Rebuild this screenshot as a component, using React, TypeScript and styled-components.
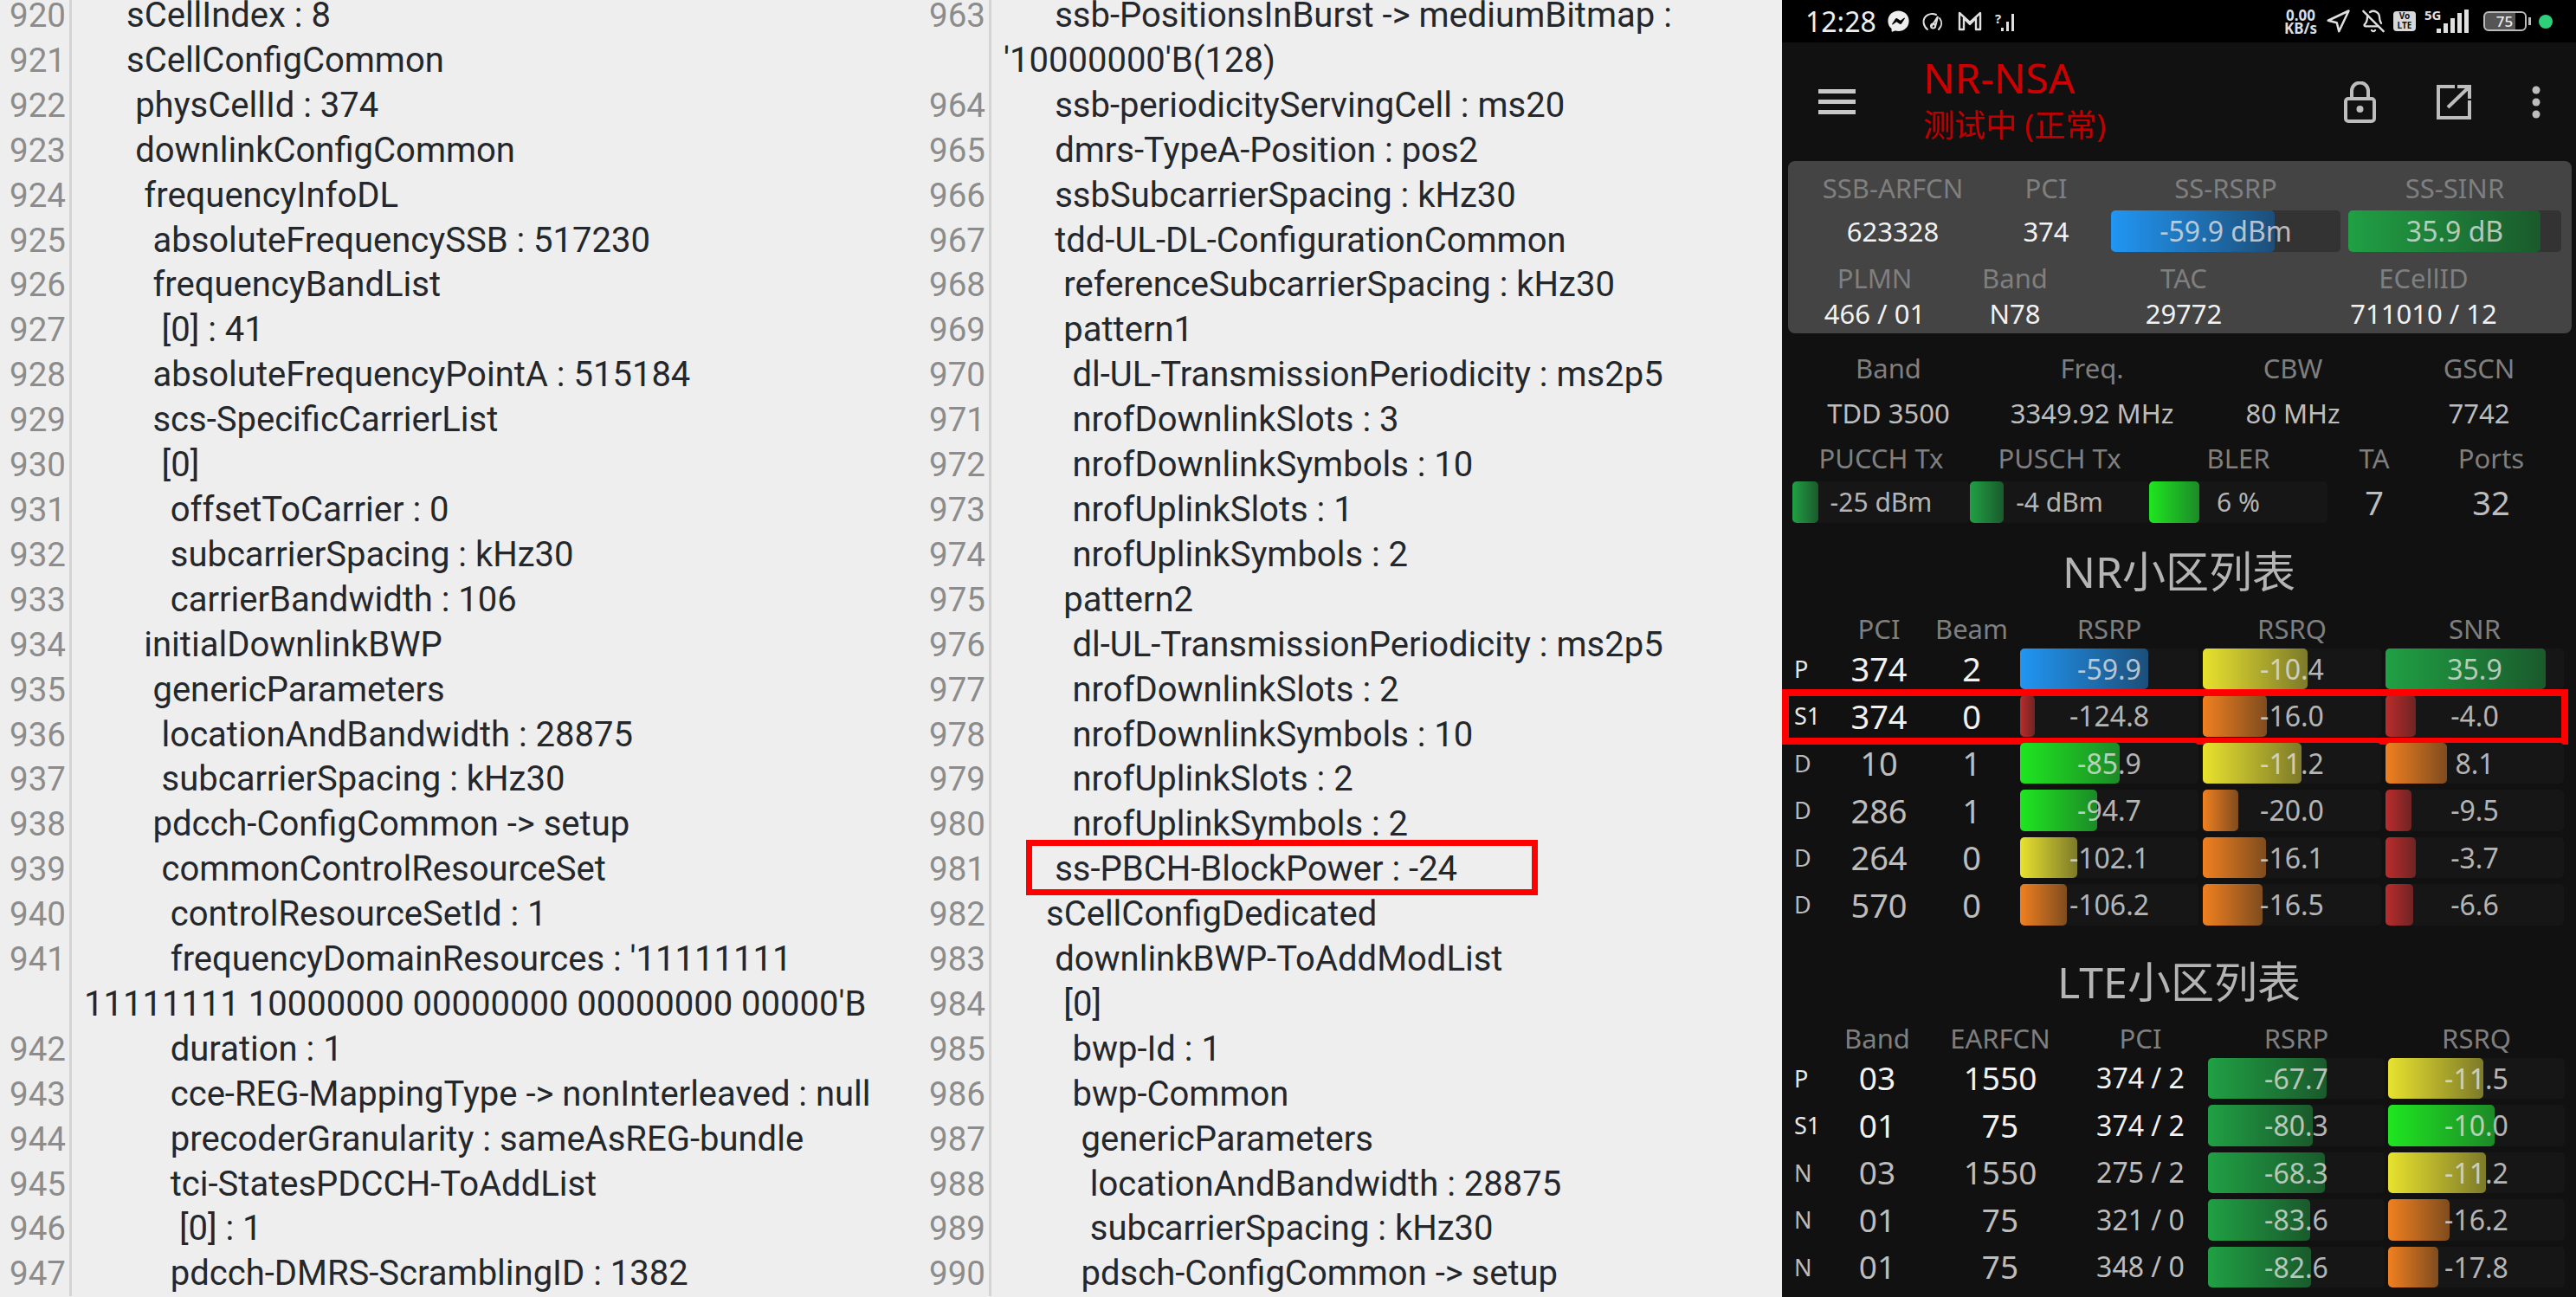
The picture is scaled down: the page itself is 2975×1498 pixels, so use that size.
import React from 'react';
import styled, { createGlobalStyle } from 'styled-components';
import { BellOff, Navigation } from 'lucide-react';
import { FaFacebookMessenger } from 'react-icons/fa';

const GlobalStyle = createGlobalStyle`
  html, body {
    margin: 0;
    padding: 0;
    background: #eeeeee;
    overflow: hidden;
  }
`;

const Page = styled.div`
  display: flex;
  width: 2975px;
  height: 1498px;
  overflow: hidden;
  background: #eeeeee;
`;

/* ---------- log panes ---------- */

const Pane = styled.div<{ $width: number }>`
  width: ${({ $width }) => $width}px;
  flex: none;
  margin-top: -8px;
  font-family: Roboto, sans-serif;
  font-size: 40px;
  line-height: 51.9px;
`;

const Row = styled.div`
  position: relative;
  display: flex;
`;

const LineNo = styled.div`
  flex: none;
  width: 64px;
  padding: 0 5px 0 11px;
  font-size: 38.5px;
  color: #8c8c8c;
  border-right: 3px solid #d4d4d4;
  text-align: right;
  box-sizing: content-box;
`;

const LineText = styled.div<{ $level: number }>`
  flex: 1;
  padding-left: 14px;
  color: #24272b;
  text-indent: ${({ $level }) => 49 + $level * 10.15}px;
`;

const LogBox = styled.div`
  position: absolute;
  left: 123px;
  top: -8px;
  width: 591px;
  height: 64px;
  box-sizing: border-box;
  border: 7px solid #ff0000;
`;

type Line = [number, number, string];

const leftLines: Line[] = [
  [920, 0, 'sCellIndex : 8'],
  [921, 0, 'sCellConfigCommon'],
  [922, 1, 'physCellId : 374'],
  [923, 1, 'downlinkConfigCommon'],
  [924, 2, 'frequencyInfoDL'],
  [925, 3, 'absoluteFrequencySSB : 517230'],
  [926, 3, 'frequencyBandList'],
  [927, 4, '[0] : 41'],
  [928, 3, 'absoluteFrequencyPointA : 515184'],
  [929, 3, 'scs-SpecificCarrierList'],
  [930, 4, '[0]'],
  [931, 5, 'offsetToCarrier : 0'],
  [932, 5, 'subcarrierSpacing : kHz30'],
  [933, 5, 'carrierBandwidth : 106'],
  [934, 2, 'initialDownlinkBWP'],
  [935, 3, 'genericParameters'],
  [936, 4, 'locationAndBandwidth : 28875'],
  [937, 4, 'subcarrierSpacing : kHz30'],
  [938, 3, 'pdcch-ConfigCommon -> setup'],
  [939, 4, 'commonControlResourceSet'],
  [940, 5, 'controlResourceSetId : 1'],
  [941, 5, "frequencyDomainResources : '11111111 11111111 10000000 00000000 00000000 00000'B"],
  [942, 5, 'duration : 1'],
  [943, 5, 'cce-REG-MappingType -> nonInterleaved : null'],
  [944, 5, 'precoderGranularity : sameAsREG-bundle'],
  [945, 5, 'tci-StatesPDCCH-ToAddList'],
  [946, 6, '[0] : 1'],
  [947, 5, 'pdcch-DMRS-ScramblingID : 1382'],
];

const rightLines: Line[] = [
  [963, 1, "ssb-PositionsInBurst -> mediumBitmap : '10000000'B(128)"],
  [964, 1, 'ssb-periodicityServingCell : ms20'],
  [965, 1, 'dmrs-TypeA-Position : pos2'],
  [966, 1, 'ssbSubcarrierSpacing : kHz30'],
  [967, 1, 'tdd-UL-DL-ConfigurationCommon'],
  [968, 2, 'referenceSubcarrierSpacing : kHz30'],
  [969, 2, 'pattern1'],
  [970, 3, 'dl-UL-TransmissionPeriodicity : ms2p5'],
  [971, 3, 'nrofDownlinkSlots : 3'],
  [972, 3, 'nrofDownlinkSymbols : 10'],
  [973, 3, 'nrofUplinkSlots : 1'],
  [974, 3, 'nrofUplinkSymbols : 2'],
  [975, 2, 'pattern2'],
  [976, 3, 'dl-UL-TransmissionPeriodicity : ms2p5'],
  [977, 3, 'nrofDownlinkSlots : 2'],
  [978, 3, 'nrofDownlinkSymbols : 10'],
  [979, 3, 'nrofUplinkSlots : 2'],
  [980, 3, 'nrofUplinkSymbols : 2'],
  [981, 1, 'ss-PBCH-BlockPower : -24'],
  [982, 0, 'sCellConfigDedicated'],
  [983, 1, 'downlinkBWP-ToAddModList'],
  [984, 2, '[0]'],
  [985, 3, 'bwp-Id : 1'],
  [986, 3, 'bwp-Common'],
  [987, 4, 'genericParameters'],
  [988, 5, 'locationAndBandwidth : 28875'],
  [989, 5, 'subcarrierSpacing : kHz30'],
  [990, 4, 'pdsch-ConfigCommon -> setup'],
];

/* ---------- phone ---------- */

const Phone = styled.div`
  width: 917px;
  height: 1498px;
  flex: none;
  overflow: hidden;
  background: #111111;
  font-family: 'Noto Sans', 'Noto Sans CJK SC', sans-serif;
  color: #bbbbbb;
`;

const StatusBar = styled.div`
  height: 49px;
  background: #000;
  display: flex;
  align-items: center;
  justify-content: space-between;
  padding: 0 27px;
  color: #e8e8e8;
`;

const StatusGroup = styled.div`
  display: flex;
  align-items: center;
`;

const Clock = styled.span`
  width: 75px;
  margin-right: 19px;
  font-size: 32px;
  line-height: 49px;
  white-space: nowrap;
  color: #eeeeee;
`;

const Spaced = styled.span<{ $gap: number; $width: number }>`
  display: flex;
  align-items: center;
  justify-content: center;
  flex: none;
  width: ${({ $width }) => $width}px;
  margin-right: ${({ $gap }) => $gap}px;
`;

const NetSpeed = styled.span`
  font-size: 17px;
  line-height: 15px;
  font-weight: 700;
  text-align: center;
  white-space: nowrap;
  color: #dddddd;
`;

const VoBadge = styled.span`
  width: 26px;
  height: 23px;
  border-radius: 4px;
  background: #d8d8d8;
  color: #111;
  font-size: 10px;
  line-height: 11px;
  font-weight: 700;
  text-align: center;
`;

const Battery = styled.span`
  position: relative;
  width: 50px;
  height: 23px;
  box-sizing: border-box;
  border: 2px solid #bbbbbb;
  border-radius: 6px;
  display: flex;
  align-items: center;
  justify-content: center;
  font-size: 17px;
  font-weight: 500;
  color: #eeeeee;
  background: linear-gradient(90deg, #555 75%, transparent 75%);
  &::after {
    content: '';
    position: absolute;
    right: -7px;
    top: 5px;
    width: 3px;
    height: 9px;
    background: #bbbbbb;
  }
`;

const GreenDot = styled.span`
  width: 16px;
  height: 16px;
  border-radius: 50%;
  background: #2fd07a;
`;

const AppBar = styled.div`
  height: 137px;
  display: flex;
  align-items: center;
  padding: 0 41px 0 42px;
`;

const Burger = styled.div`
  width: 43px;
  height: 29px;
  margin-right: 78px;
  display: flex;
  flex-direction: column;
  justify-content: space-between;
  & > span {
    height: 5px;
    background: #c8c8c8;
  }
`;

const TitleBlock = styled.div`
  flex: 1;
  color: #cc0000;
`;

const AppTitle = styled.div`
  font-size: 48px;
  line-height: 53px;
`;

const AppSub = styled.div`
  font-size: 36px;
  line-height: 57px;
  color: #c00000;
`;

const Actions = styled.div`
  display: flex;
  align-items: center;
  gap: 69px;
`;

const Card = styled.div`
  margin: 0 5px 0 7px;
  padding: 11px 0 2px;
  height: 199px;
  box-sizing: border-box;
  background: #444444;
  border-radius: 8px;
`;

const Grid = styled.div<{ $cols: string; $top?: number; $left?: number }>`
  display: grid;
  grid-template-columns: ${({ $cols }) => $cols};
  margin-top: ${({ $top }) => $top ?? 0}px;
  margin-left: ${({ $left }) => $left ?? 0}px;
  align-items: center;
`;

const CardTop = styled(Grid)`
  & > :nth-child(3) {
    margin-left: 19px;
  }
  & > :nth-child(4) {
    margin-left: 9px;
  }
`;

const Label = styled.div`
  font-size: 31px;
  line-height: 40px;
  text-align: center;
  white-space: nowrap;
  color: #7f7f7f;
`;

const Value = styled.div<{ $bright?: boolean; $size?: number }>`
  font-size: ${({ $size }) => $size ?? 31}px;
  line-height: 40px;
  text-align: center;
  white-space: nowrap;
  color: ${({ $bright }) => ($bright ? '#f2f2f2' : '#bdbdbd')};
`;

const tones = {
  blue: 'linear-gradient(90deg, #2196f3, #1c4f7a)',
  green: 'linear-gradient(90deg, #20a044, #1a5a2c)',
  lime: 'linear-gradient(90deg, #1fe620, #1c8a28)',
  yellow: 'linear-gradient(90deg, #e8e22e, #7d7a2a)',
  orange: 'linear-gradient(90deg, #f08020, #7f4c1e)',
  red: 'linear-gradient(90deg, #bb2c2c, #6e2424)',
};

type Tone = keyof typeof tones;

const MeterBox = styled.div<{ $track: string }>`
  position: relative;
  height: 47.5px;
  border-radius: 5px;
  background: ${({ $track }) => $track};
  display: flex;
  align-items: center;
  justify-content: center;
`;

const MeterFill = styled.div<{ $tone: Tone }>`
  position: absolute;
  left: 0;
  top: 0;
  bottom: 0;
  border-radius: 5px;
  background: ${({ $tone }) => tones[$tone]};
`;

const MeterText = styled.span<{ $size: number }>`
  position: relative;
  font-size: ${({ $size }) => $size}px;
  white-space: nowrap;
  color: rgba(226, 226, 226, 0.78);
`;

const Meter = ({
  fill,
  tone,
  text,
  track = '#161616',
  size = 32,
}: {
  fill: number;
  tone: Tone;
  text: string;
  track?: string;
  size?: number;
}) => (
  <MeterBox $track={track}>
    <MeterFill $tone={tone} style={{ width: fill }} />
    <MeterText $size={size}>{text}</MeterText>
  </MeterBox>
);

const SectionTitle = styled.div<{ $top: number }>`
  margin-top: ${({ $top }) => $top}px;
  font-size: 50px;
  line-height: 60px;
  text-align: center;
  color: #b4b4b4;
`;

const NR_COLS = '52px 120px 94px 215px 211px 211px';
const LTE_COLS = '52px 116px 168px 156px 204px 208px';

const NrLine = styled(Grid)`
  & > :nth-child(4) {
    margin-left: 9px;
  }
  & > :nth-child(n + 5) {
    margin-left: 5px;
  }
`;

const LteLine = styled(Grid)`
  & > :nth-child(6) {
    margin-left: 4px;
  }
`;

const TableRows = styled.div<{ $top: number }>`
  margin-top: ${({ $top }) => $top}px;
  display: flex;
  flex-direction: column;
  gap: 7px;
`;

const RowWrap = styled.div`
  position: relative;
`;

const Tag = styled.div<{ $bright?: boolean }>`
  padding-left: 14px;
  font-size: 27px;
  line-height: 47px;
  color: ${({ $bright }) => ($bright ? '#e8e8e8' : '#bbbbbb')};
`;

const ServingBox = styled.div`
  position: absolute;
  left: 0;
  top: -7.5px;
  width: 908px;
  height: 64px;
  box-sizing: border-box;
  border: 8px solid #ff0000;
`;

type NrCell = {
  tag: string;
  pci: string;
  beam: string;
  rsrp: [string, number, Tone];
  rsrq: [string, number, Tone];
  snr: [string, number, Tone];
};

const nrCells: NrCell[] = [
  { tag: 'P', pci: '374', beam: '2', rsrp: ['-59.9', 148, 'blue'], rsrq: ['-10.4', 121, 'yellow'], snr: ['35.9', 185, 'green'] },
  { tag: 'S1', pci: '374', beam: '0', rsrp: ['-124.8', 17, 'red'], rsrq: ['-16.0', 74, 'orange'], snr: ['-4.0', 35, 'red'] },
  { tag: 'D', pci: '10', beam: '1', rsrp: ['-85.9', 115, 'lime'], rsrq: ['-11.2', 114, 'yellow'], snr: ['8.1', 71, 'orange'] },
  { tag: 'D', pci: '286', beam: '1', rsrp: ['-94.7', 89, 'lime'], rsrq: ['-20.0', 41, 'orange'], snr: ['-9.5', 30, 'red'] },
  { tag: 'D', pci: '264', beam: '0', rsrp: ['-102.1', 66, 'yellow'], rsrq: ['-16.1', 73, 'orange'], snr: ['-3.7', 35, 'red'] },
  { tag: 'D', pci: '570', beam: '0', rsrp: ['-106.2', 54, 'orange'], rsrq: ['-16.5', 69, 'orange'], snr: ['-6.6', 32, 'red'] },
];

type LteCell = {
  tag: string;
  band: string;
  earfcn: string;
  pci: string;
  rsrp: [string, number, Tone];
  rsrq: [string, number, Tone];
};

const lteCells: LteCell[] = [
  { tag: 'P', band: '03', earfcn: '1550', pci: '374 / 2', rsrp: ['-67.7', 137, 'green'], rsrq: ['-11.5', 110, 'yellow'] },
  { tag: 'S1', band: '01', earfcn: '75', pci: '374 / 2', rsrp: ['-80.3', 121, 'green'], rsrq: ['-10.0', 123, 'lime'] },
  { tag: 'N', band: '03', earfcn: '1550', pci: '275 / 2', rsrp: ['-68.3', 135, 'green'], rsrq: ['-11.2', 113, 'yellow'] },
  { tag: 'N', band: '01', earfcn: '75', pci: '321 / 0', rsrp: ['-83.6', 118, 'green'], rsrq: ['-16.2', 71, 'orange'] },
  { tag: 'N', band: '01', earfcn: '75', pci: '348 / 0', rsrp: ['-82.6', 119, 'green'], rsrq: ['-17.8', 58, 'orange'] },
];

const GaugeIcon = () => (
  <svg width="27" height="24" viewBox="0 0 27 24" fill="none" stroke="#e0e0e0" strokeWidth="2" strokeLinecap="round">
    <path d="M7 21C2 17 1 10 5 6c3-3 8-4 12-2" />
    <path d="M21 8c3 4 3 9-1 13" />
    <path d="M12 17l7-11-3 12" />
    <circle cx="13.5" cy="17" r="2.5" />
  </svg>
);

const MailIcon = () => (
  <svg width="28" height="23" viewBox="0 0 28 23" fill="none" stroke="#e0e0e0" strokeWidth="2.4" strokeLinejoin="round">
    <path d="M2 21V2l12 11L26 2v19h-5V8l-7 7-7-7v13z" />
  </svg>
);

const NoSimIcon = () => (
  <svg width="24" height="24" viewBox="0 0 24 24" fill="#e0e0e0">
    <rect x="7" y="19" width="3" height="4" />
    <rect x="13" y="12" width="3" height="11" />
    <rect x="19" y="3" width="3" height="20" />
    <text x="0" y="14" fontFamily="Noto Sans" fontWeight="700" fontSize="15" fill="#e0e0e0">?</text>
  </svg>
);

const SignalIcon = () => (
  <svg width="52" height="28" viewBox="0 0 52 28" fill="#e0e0e0">
    <text x="0" y="12" fontFamily="Noto Sans" fontWeight="700" fontSize="15">5G</text>
    <rect x="14" y="22" width="5" height="5" />
    <rect x="22" y="16" width="5" height="11" />
    <rect x="30" y="10" width="5" height="17" />
    <rect x="38" y="4" width="5" height="23" />
    <rect x="46" y="0" width="5" height="27" />
  </svg>
);

const LockIcon = () => (
  <svg width="37" height="48" viewBox="0 0 37 48" fill="none" stroke="#bdbdbd" strokeWidth="4">
    <path d="M9 20V11a9.500 9.500 0 0 1 19 0v9" />
    <rect x="2" y="20" width="33" height="26" rx="3" />
    <circle cx="18.500" cy="32" r="4" fill="#bdbdbd" stroke="none" />
  </svg>
);

const ShareIcon = () => (
  <svg width="42" height="42" viewBox="0 0 42 42" fill="none" stroke="#bdbdbd" strokeWidth="4">
    <path d="M22 3H3v36h36V19" />
    <path d="M14 27L39 3M25 3h14v14" />
  </svg>
);

const DotsIcon = () => (
  <svg width="10" height="38" viewBox="0 0 10 38" fill="#bdbdbd">
    <circle cx="5" cy="5" r="4.500" />
    <circle cx="5" cy="19" r="4.500" />
    <circle cx="5" cy="33" r="4.500" />
  </svg>
);

const App = () => {
  return (
    <Page>
      <GlobalStyle />
      <Pane $width={1062}>
        {leftLines.map(([no, level, text]) => (
          <Row key={no}>
            <LineNo>{no}</LineNo>
            <LineText $level={level}>{text}</LineText>
          </Row>
        ))}
      </Pane>
      <Pane $width={996}>
        {rightLines.map(([no, level, text]) => (
          <Row key={no}>
            <LineNo>{no}</LineNo>
            <LineText $level={level}>{text}</LineText>
            {no === 981 && <LogBox />}
          </Row>
        ))}
      </Pane>
      <Phone>
        <StatusBar>
          <StatusGroup>
            <Clock>12:28</Clock>
            <Spaced $width={26} $gap={14}>
              <FaFacebookMessenger size={25} color="#eeeeee" />
            </Spaced>
            <Spaced $width={27} $gap={15}>
              <GaugeIcon />
            </Spaced>
            <Spaced $width={28} $gap={15}>
              <MailIcon />
            </Spaced>
            <Spaced $width={24} $gap={0}>
              <NoSimIcon />
            </Spaced>
          </StatusGroup>
          <StatusGroup>
            <Spaced $width={40} $gap={7}>
              <NetSpeed>
                0.00
                <br />
                KB/s
              </NetSpeed>
            </Spaced>
            <Spaced $width={31} $gap={12}>
              <Navigation size={30} strokeWidth={2} color="#e0e0e0" />
            </Spaced>
            <Spaced $width={28} $gap={9}>
              <BellOff size={29} strokeWidth={2} color="#e0e0e0" />
            </Spaced>
            <Spaced $width={26} $gap={10}>
              <VoBadge>
                Vo
                <br />
                LTE
              </VoBadge>
            </Spaced>
            <Spaced $width={52} $gap={13}>
              <SignalIcon />
            </Spaced>
            <Spaced $width={55} $gap={12}>
              <Battery>75</Battery>
            </Spaced>
            <GreenDot />
          </StatusGroup>
        </StatusBar>

        <AppBar>
          <Burger>
            <span />
            <span />
            <span />
          </Burger>
          <TitleBlock>
            <AppTitle>NR-NSA</AppTitle>
            <AppSub>测试中 (正常)</AppSub>
          </TitleBlock>
          <Actions>
            <LockIcon />
            <ShareIcon />
            <DotsIcon />
          </Actions>
        </AppBar>

        <Card>
          <CardTop $cols="242px 112px 284px 255px">
            <Label>SSB-ARFCN</Label>
            <Label>PCI</Label>
            <Label>SS-RSRP</Label>
            <Label>SS-SINR</Label>
          </CardTop>
          <CardTop $cols="242px 112px 284px 255px" $top={6}>
            <Value $bright>623328</Value>
            <Value $bright>374</Value>
            <Meter fill={189} tone="blue" text="-59.9 dBm" track="#333333" />
            <Meter fill={222} tone="green" text="35.9 dB" track="#333333" />
          </CardTop>
          <Grid $cols="200px 124px 266px 288px" $top={10}>
            <Label>PLMN</Label>
            <Label>Band</Label>
            <Label>TAC</Label>
            <Label>ECellID</Label>
          </Grid>
          <Grid $cols="200px 124px 266px 288px" $top={1}>
            <Value $bright>466 / 01</Value>
            <Value $bright>N78</Value>
            <Value $bright>29772</Value>
            <Value $bright>711010 / 12</Value>
          </Grid>
        </Card>

        <Grid $cols="246px 224px 240px 190px" $top={20}>
          <Label>Band</Label>
          <Label>Freq.</Label>
          <Label>CBW</Label>
          <Label>GSCN</Label>
        </Grid>
        <Grid $cols="246px 224px 240px 190px" $top={12}>
          <Value>TDD 3500</Value>
          <Value>3349.92 MHz</Value>
          <Value>80 MHz</Value>
          <Value>7742</Value>
        </Grid>
        <Grid $cols="205px 207px 206px 108px 162px" $top={12} $left={12}>
          <Label>PUCCH Tx</Label>
          <Label>PUSCH Tx</Label>
          <Label>BLER</Label>
          <Label>TA</Label>
          <Label>Ports</Label>
        </Grid>
        <Grid $cols="205px 207px 206px 108px 162px" $top={7} $left={12}>
          <Meter fill={30} tone="green" text="-25 dBm" size={30} />
          <Meter fill={39} tone="green" text="-4 dBm" size={30} />
          <Meter fill={58} tone="lime" text="6 %" size={30} />
          <Value $size={38}>7</Value>
          <Value $size={38}>32</Value>
        </Grid>

        <SectionTitle $top={26}>NR小区列表</SectionTitle>
        <NrLine $cols={NR_COLS} $top={16}>
          <span />
          <Label>PCI</Label>
          <Label>Beam</Label>
          <Label>RSRP</Label>
          <Label>RSRQ</Label>
          <Label>SNR</Label>
        </NrLine>
        <TableRows $top={3}>
          {nrCells.map((cell, i) => (
            <RowWrap key={i}>
              <NrLine $cols={NR_COLS}>
                <Tag $bright={i < 2}>{cell.tag}</Tag>
                <Value $size={38} $bright={i < 2}>
                  {cell.pci}
                </Value>
                <Value $size={38} $bright={i < 2}>
                  {cell.beam}
                </Value>
                <Meter text={cell.rsrp[0]} fill={cell.rsrp[1]} tone={cell.rsrp[2]} />
                <Meter text={cell.rsrq[0]} fill={cell.rsrq[1]} tone={cell.rsrq[2]} />
                <Meter text={cell.snr[0]} fill={cell.snr[1]} tone={cell.snr[2]} />
              </NrLine>
              {i === 1 && <ServingBox />}
            </RowWrap>
          ))}
        </TableRows>

        <SectionTitle $top={35}>LTE小区列表</SectionTitle>
        <LteLine $cols={LTE_COLS} $top={15}>
          <span />
          <Label>Band</Label>
          <Label>EARFCN</Label>
          <Label>PCI</Label>
          <Label>RSRP</Label>
          <Label>RSRQ</Label>
        </LteLine>
        <TableRows $top={3}>
          {lteCells.map((cell, i) => (
            <LteLine key={i} $cols={LTE_COLS}>
              <Tag $bright={i < 2}>{cell.tag}</Tag>
              <Value $size={37} $bright={i < 2}>
                {cell.band}
              </Value>
              <Value $size={37} $bright={i < 2}>
                {cell.earfcn}
              </Value>
              <Value $size={32} $bright={i < 2}>
                {cell.pci}
              </Value>
              <Meter text={cell.rsrp[0]} fill={cell.rsrp[1]} tone={cell.rsrp[2]} />
              <Meter text={cell.rsrq[0]} fill={cell.rsrq[1]} tone={cell.rsrq[2]} />
            </LteLine>
          ))}
        </TableRows>
      </Phone>
    </Page>
  );
};

export default App;
